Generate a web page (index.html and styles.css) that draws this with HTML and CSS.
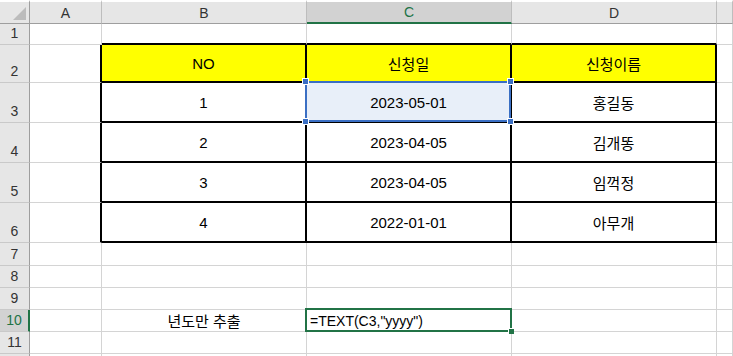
FILE: index.html
```html
<!DOCTYPE html>
<html lang="ko">
<head>
    <meta charset="UTF-8">
    <title>신청 목록</title>
    <link rel="stylesheet" href="styles.css">
</head>
<body>
  <div class="sheet">
    <!-- column headers -->
    <div class="corner">
      <svg width="30" height="22" viewBox="0 0 30 22"><polygon points="26,5 26,18 13,18" fill="#bcbcbc"/></svg>
    </div>
    <div class="colhead">A</div>
    <div class="colhead">B</div>
    <div class="colhead on">C</div>
    <div class="colhead">D</div>
    <div class="colhead"></div>

    <!-- 1 -->
    <div class="rowhead">1</div>
    <div class="cell"></div>
    <div class="cell above"></div>
    <div class="cell above"></div>
    <div class="cell above"></div>
    <div class="cell"></div>

    <!-- 2 -->
    <div class="rowhead">2</div>
    <div class="cell before"></div>
    <div class="cell tb head">NO</div>
    <div class="cell tb head">신청일</div>
    <div class="cell tb head">신청이름</div>
    <div class="cell"></div>

    <!-- 3 -->
    <div class="rowhead">3</div>
    <div class="cell before"></div>
    <div class="cell tb">1</div>
    <div class="cell tb picked">
      2023-05-01
      <div class="selbox">
        <span class="knob k1"></span><span class="knob k2"></span>
        <span class="knob k3"></span><span class="knob k4"></span>
      </div>
    </div>
    <div class="cell tb">홍길동</div>
    <div class="cell"></div>

    <!-- 4 -->
    <div class="rowhead">4</div>
    <div class="cell before"></div>
    <div class="cell tb">2</div>
    <div class="cell tb">2023-04-05</div>
    <div class="cell tb">김개똥</div>
    <div class="cell"></div>

    <!-- 5 -->
    <div class="rowhead">5</div>
    <div class="cell before"></div>
    <div class="cell tb">3</div>
    <div class="cell tb">2023-04-05</div>
    <div class="cell tb">임꺽정</div>
    <div class="cell"></div>

    <!-- 6 -->
    <div class="rowhead">6</div>
    <div class="cell before"></div>
    <div class="cell tb">4</div>
    <div class="cell tb">2022-01-01</div>
    <div class="cell tb">아무개</div>
    <div class="cell"></div>

    <!-- 7 -->
    <div class="rowhead">7</div>
    <div class="cell"></div>
    <div class="cell"></div>
    <div class="cell"></div>
    <div class="cell"></div>
    <div class="cell"></div>

    <!-- 8 -->
    <div class="rowhead">8</div>
    <div class="cell"></div>
    <div class="cell"></div>
    <div class="cell"></div>
    <div class="cell"></div>
    <div class="cell"></div>

    <!-- 9 -->
    <div class="rowhead">9</div>
    <div class="cell"></div>
    <div class="cell"></div>
    <div class="cell"></div>
    <div class="cell"></div>
    <div class="cell"></div>

    <!-- 10 -->
    <div class="rowhead on">10</div>
    <div class="cell"></div>
    <div class="cell">년도만 추출</div>
    <div class="cell active">
      <span class="formula">=TEXT(C3,"yyyy")</span>
      <div class="activebox"><span class="fill"></span></div>
    </div>
    <div class="cell"></div>
    <div class="cell"></div>

    <!-- 11 -->
    <div class="rowhead">11</div>
    <div class="cell"></div>
    <div class="cell"></div>
    <div class="cell"></div>
    <div class="cell"></div>
    <div class="cell"></div>

    <!-- 12 -->
    <div class="rowhead"></div>
    <div class="cell"></div>
    <div class="cell"></div>
    <div class="cell"></div>
    <div class="cell"></div>
    <div class="cell"></div>
  </div>
</body>
</html>
```

FILE: styles.css
```css
html,body,div,span{margin:0;padding:0;}
html,body{
  width:100%;
  height:100%;
  overflow:hidden;
  background-color:#fff;
  font-family:"Liberation Sans","Noto Sans CJK KR",sans-serif;
}
.sheet{
  display:grid;
  grid-template-columns:30px 72px 205px 205px 205px 1fr;
  grid-template-rows:24px 21px 38px 40px 40px 40px 40px 23px 22px 22px 22px 22px 1fr;
  height:356px;
}
.sheet > div{
  box-sizing:border-box;
}
/* header strip */
.corner{
  background-color:#e6e6e6;
  border-top:2px solid #fff;
  border-right:1px solid #9e9e9e;
  border-bottom:1px solid #9e9e9e;
}
.corner svg{
  display:block;
}
.colhead{
  background-color:#e6e6e6;
  border-top:2px solid #fff;
  border-right:1px solid #bdbdbd;
  border-bottom:1px solid #9e9e9e;
  display:flex;
  align-items:center;
  justify-content:center;
  font-size:14px;
  color:#333;
}
.colhead.on{
  background-color:#d2d2d2;
  border-bottom:2px solid #217346;
  color:#217346;
}
.rowhead{
  background-color:#e6e6e6;
  border-right:1px solid #9e9e9e;
  border-bottom:1px solid #c9c9c9;
  display:flex;
  align-items:flex-end;
  justify-content:center;
  padding-bottom:3px;
  font-size:14px;
  color:#333;
}
.rowhead.on{
  background-color:#d2d2d2;
  border-right:2px solid #217346;
  color:#217346;
}
/* cells */
.cell{
  position:relative;
  border-right:1px solid #d4d4d4;
  border-bottom:1px solid #d4d4d4;
  display:flex;
  align-items:center;
  justify-content:center;
  font-size:15px;
  color:#000;
}
.tb{
  border-right:2px solid #000;
  border-bottom:2px solid #000;
}
.above{
  border-bottom:2px solid #000;
}
.before{
  border-right:2px solid #000;
}
.head{
  background-color:#ffff00;
}
/* selected range */
.picked{
  background-color:#e8eff9;
}
.selbox{
  position:absolute;
  top:-2px;
  left:-2px;
  right:-1px;
  bottom:-1px;
  border:2px solid #3a6fc4;
  z-index:2;
}
.knob{
  position:absolute;
  width:5px;
  height:5px;
  background-color:#3a6fc4;
  border:1px solid #fff;
}
.k1{top:-5px;left:-5px;}
.k2{top:-5px;right:-5px;}
.k3{bottom:-5px;left:-5px;}
.k4{bottom:-5px;right:-5px;}
/* active cell */
.active{
  justify-content:flex-start;
  padding-left:3px;
}
.formula{
  font-size:14px;
}
.activebox{
  position:absolute;
  top:-2px;
  left:-2px;
  right:-1px;
  bottom:-1px;
  border:2px solid #217346;
  z-index:2;
}
.fill{
  position:absolute;
  right:-4px;
  bottom:-4px;
  width:5px;
  height:5px;
  background-color:#217346;
  border:1px solid #fff;
  border-width:1px 0 0 1px;
}
```
